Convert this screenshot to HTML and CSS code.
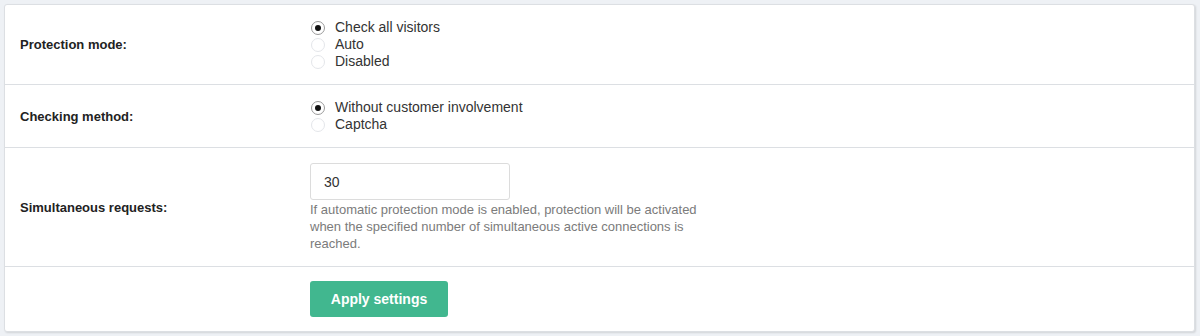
FILE: index.html
```html
<!DOCTYPE html>
<html lang="en">
<head>
    <meta charset="UTF-8">
    <title>Protection settings</title>
    <link rel="stylesheet" href="styles.css">
</head>
<body>
    <div class="card">
        <div class="row">
            <div class="row-label">Protection mode:</div>
            <div class="row-value">
                <label class="radio"><span class="dot checked"></span>Check all visitors</label>
                <label class="radio"><span class="dot"></span>Auto</label>
                <label class="radio"><span class="dot"></span>Disabled</label>
            </div>
        </div>

        <div class="row">
            <div class="row-label">Checking method:</div>
            <div class="row-value">
                <label class="radio"><span class="dot checked"></span>Without customer involvement</label>
                <label class="radio"><span class="dot"></span>Captcha</label>
            </div>
        </div>

        <div class="row">
            <div class="row-label">Simultaneous requests:</div>
            <div class="row-value">
                <input type="text" class="text-input" value="30">
                <p class="help">If automatic protection mode is enabled, protection will be activated when the specified number of simultaneous active connections is reached.</p>
            </div>
        </div>

        <div class="row">
            <div class="row-label"></div>
            <div class="row-value">
                <button class="apply-button">Apply settings</button>
            </div>
        </div>
    </div>
</body>
</html>
```

FILE: styles.css
```css
:root {
    --page-bg: #eef1f5;
    --border: #dcdfe3;
    --text-dark: #222;
    --text-muted: #7b7b7b;
    --green: #41b78f;
    --white: #ffffff;
}

* {
    margin: 0;
    padding: 0;
    box-sizing: border-box;
}

body {
    font-family: "Liberation Sans", Arial, sans-serif;
    background-color: var(--page-bg);
    color: var(--text-dark);
    padding: 4px 5px 4px 4px;
}

.card {
    background-color: var(--white);
    border: 1px solid var(--border);
    border-radius: 3px;
    box-shadow: 1px 1px 2px rgba(0, 0, 0, 0.12);
}

.row {
    display: flex;
    align-items: center;
    border-bottom: 1px solid var(--border);
    padding: 14px 0;
}

.row:last-child {
    border-bottom: none;
}

.row-label {
    width: 305px;
    flex-shrink: 0;
    padding-left: 15px;
    font-size: 13px;
    font-weight: bold;
}

.row-value {
    font-size: 14px;
    line-height: 17px;
}

.radio {
    display: flex;
    align-items: center;
    color: #333;
}

.dot {
    width: 14px;
    height: 14px;
    margin-left: 1px;
    margin-right: 10px;
    border: 1px solid #e4e6ea;
    border-radius: 50%;
    position: relative;
}

.dot.checked {
    border-color: #9a9a9a;
}

.dot.checked::after {
    content: "";
    position: absolute;
    left: 3px;
    top: 3px;
    width: 6px;
    height: 6px;
    border-radius: 50%;
    background-color: #111;
}

.text-input {
    display: block;
    width: 200px;
    height: 37px;
    margin-top: 1px;
    padding: 0 13px;
    border: 1px solid #dcdcdc;
    border-radius: 3px;
    font-family: inherit;
    font-size: 14px;
    color: #333;
}

.help {
    width: 400px;
    margin-top: 1px;
    font-size: 13px;
    line-height: 17px;
    color: var(--text-muted);
}

.apply-button {
    background-color: var(--green);
    color: var(--white);
    border: none;
    border-radius: 3px;
    width: 138px;
    height: 36px;
    font-family: inherit;
    font-size: 14px;
    font-weight: bold;
    cursor: pointer;
}
```
